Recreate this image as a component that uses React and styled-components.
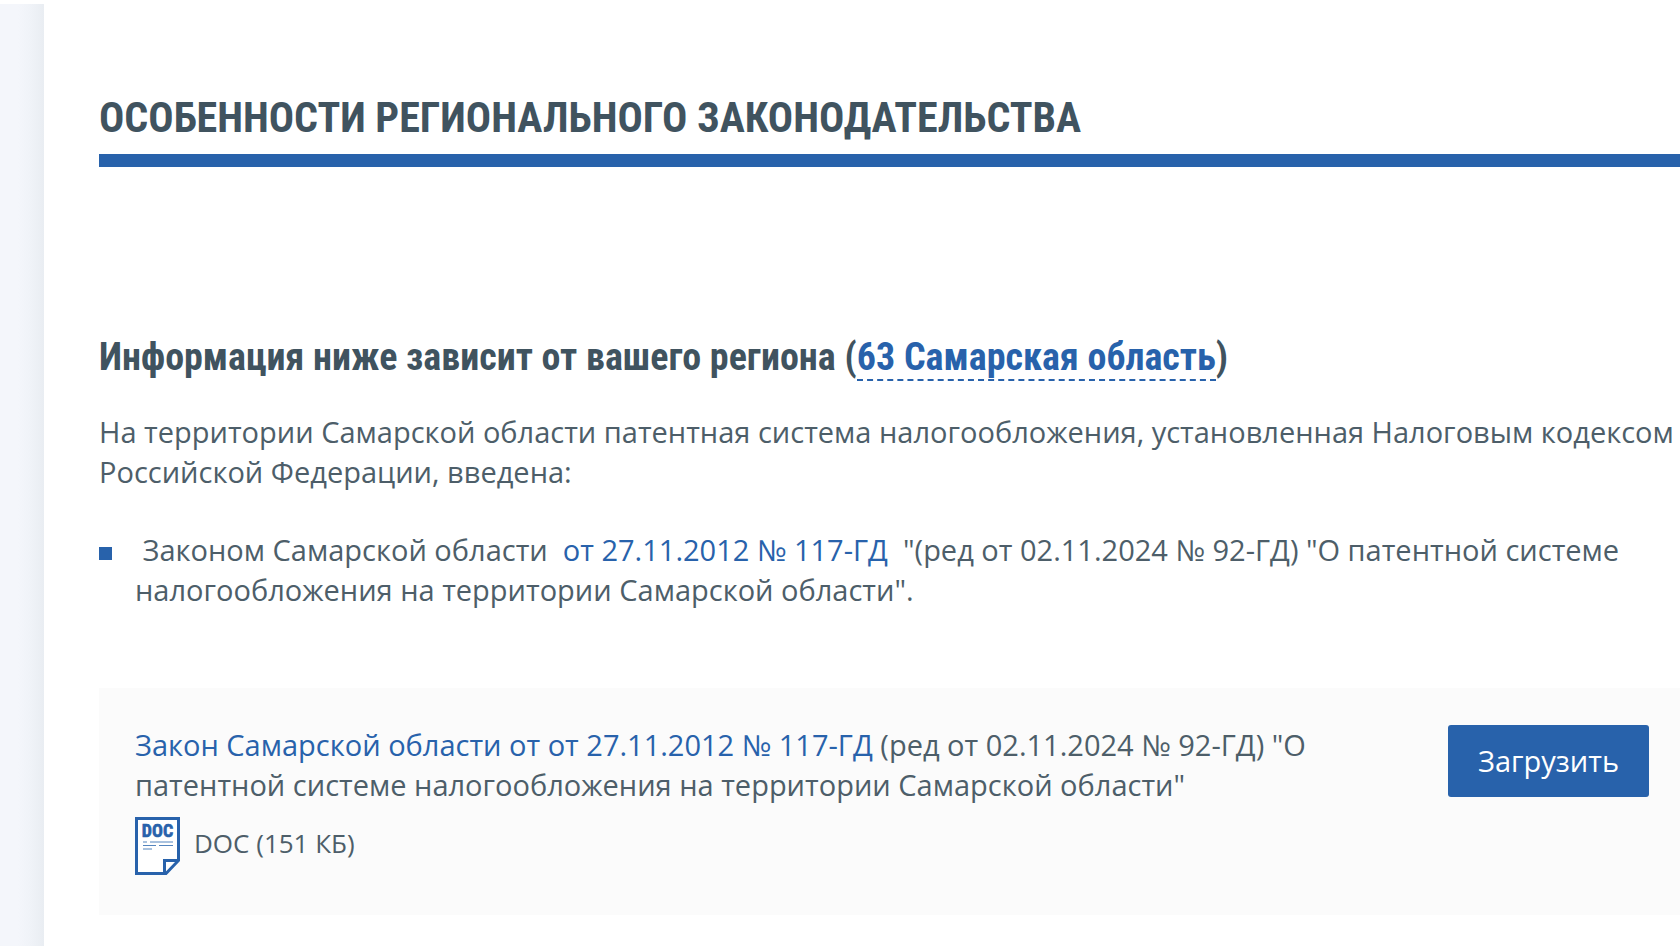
import React from "react";
import styled, { createGlobalStyle } from "styled-components";

const GlobalStyle = createGlobalStyle`
  *, *::before, *::after { box-sizing: border-box; }
  body {
    margin: 0;
    background: #fff;
    color: #4d5e69;
    font-family: "Open Sans", "Noto Sans", sans-serif;
    font-size: 29px;
    line-height: 40px;
    overflow-x: hidden;
  }
`;

const Page = styled.div`
  display: flex;
  align-items: stretch;
  min-height: 100vh;
  padding: 4px 0 3px;
`;

const Gutter = styled.div`
  flex: 0 0 44px;
  background: linear-gradient(to right, #f4f6fb 0, #f4f6fb 18px, #f0f3f8 30px, #e9edf2 44px);
`;

const Content = styled.main`
  flex: 1;
  min-width: 0;
  padding: 88px 0 30px 55px;
`;

const Title = styled.h1`
  margin: 0 0 168px;
  padding-bottom: 10px;
  border-bottom: 13px solid #2862ab;
  color: #40535f;
  font: bold 42px/52px "Roboto Condensed", "Liberation Sans Narrow", Roboto, sans-serif;
  text-transform: uppercase;
`;

const RegionHeading = styled.h2`
  margin: 0 0 33px;
  color: #40535f;
  font: bold 38px/44px "Roboto Condensed", "Liberation Sans Narrow", Roboto, sans-serif;
`;

const Link = styled.a`
  color: #2862ab;
  text-decoration: none;
`;

const RegionLink = styled(Link)`
  border-bottom: 2px dashed #2862ab;
`;

const Intro = styled.p`
  margin: 0 0 38px;
`;

const LawList = styled.ul`
  margin: 0 0 78px;
  padding: 0;
  list-style: none;
`;

const LawItem = styled.li`
  display: flex;
  align-items: flex-start;
  gap: 23px;
  padding-right: 24px;

  &::before {
    content: "";
    flex: 0 0 13px;
    height: 13px;
    margin-top: 17px;
    background: #2862ab;
  }
`;

const FileCard = styled.section`
  display: flex;
  justify-content: space-between;
  align-items: flex-start;
  gap: 120px;
  padding: 37px 31px 40px 36px;
  background: #fbfbfb;
`;

const FileName = styled.p`
  margin: 0 0 12px;
`;

const FileMeta = styled.div`
  display: flex;
  align-items: flex-start;
  gap: 14px;
  font-size: 26px;
  line-height: 52px;
`;

const DownloadButton = styled.button`
  flex: none;
  padding: 16px 30px;
  border: 0;
  border-radius: 3px;
  background: #2862ab;
  color: #fff;
  font: inherit;
  cursor: pointer;
`;

const DocIcon = () => (
  <svg width="45" height="58" viewBox="0 0 45 58" fill="none" stroke="#2862ab" aria-hidden="true">
    <path d="M1.5 1.5H43.5V43.5L31 56.5H1.5Z" fill="#fff" strokeWidth="3" />
    <path d="M29.5 56V43.5H43" strokeWidth="3" />
    <path d="M8 25H12M15 25H38M8 28.5H21M24 28.5H38M8 32H17" strokeWidth="1" stroke="#5585be" />
    <text x="22.5" y="20" textAnchor="middle" fill="#2862ab" strokeWidth="0.6" fontFamily="Roboto Condensed, Liberation Sans Narrow, sans-serif" fontWeight="bold" fontSize="18">DOC</text>
  </svg>
);

export default function App() {
  return (
    <>
      <GlobalStyle />
      <Page>
        <Gutter />
        <Content>
          <Title>Особенности регионального законодательства</Title>
          <RegionHeading>
            Информация ниже зависит от вашего региона (<RegionLink href="#region">63 Самарская область</RegionLink>)
          </RegionHeading>
          <Intro>
            На территории Самарской области патентная система налогообложения, установленная Налоговым кодексом
            Российской Федерации, введена:
          </Intro>
          <LawList>
            <LawItem>
              <span>
                &nbsp;Законом Самарской области&nbsp; <Link href="#law">от 27.11.2012 № 117-ГД</Link>
                &nbsp; "(ред от 02.11.2024 № 92-ГД) "О патентной системе налогообложения на территории Самарской области".
              </span>
            </LawItem>
          </LawList>
          <FileCard>
            <div>
              <FileName>
                <Link href="#file">Закон Самарской области от от 27.11.2012 № 117-ГД</Link> (ред от 02.11.2024 № 92-ГД) "О патентной системе налогообложения на территории Самарской области"
              </FileName>
              <FileMeta>
                <DocIcon />
                <span>DOC (151 КБ)</span>
              </FileMeta>
            </div>
            <DownloadButton type="button">Загрузить</DownloadButton>
          </FileCard>
        </Content>
      </Page>
    </>
  );
}
